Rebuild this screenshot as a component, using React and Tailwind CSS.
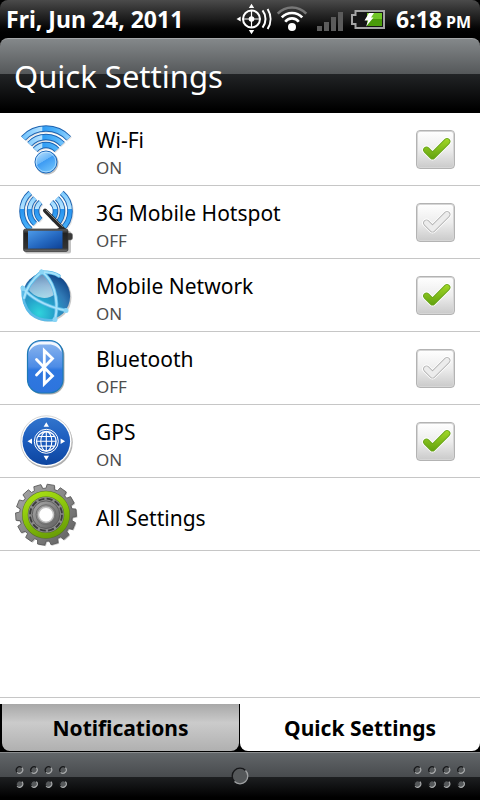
import { useState } from 'react';

const ROWS = [
  { id: 'wifi', label: 'Wi-Fi', icon: WifiIcon, on: true },
  { id: 'hotspot', label: '3G Mobile Hotspot', icon: HotspotIcon, on: false },
  { id: 'mobile', label: 'Mobile Network', icon: GlobeIcon, on: true },
  { id: 'bluetooth', label: 'Bluetooth', icon: BluetoothIcon, on: false },
  { id: 'gps', label: 'GPS', icon: GpsIcon, on: true },
];

const TABS = ['Notifications', 'Quick Settings'];

// arc centred on cx,cy going from angle a to angle b (degrees, clockwise)
function arc(cx, cy, r, a, b) {
  const p = (t) => {
    const rad = (t * Math.PI) / 180;
    return `${(cx + r * Math.cos(rad)).toFixed(2)} ${(cy + r * Math.sin(rad)).toFixed(2)}`;
  };
  return `M${p(a)}A${r} ${r} 0 0 1 ${p(b)}`;
}

function gearPath(cx, cy, outer, inner, teeth) {
  const step = (Math.PI * 2) / teeth;
  const pts = [];
  for (let i = 0; i < teeth; i++) {
    const a = i * step - Math.PI / 2 + 0.16;
    [[-0.36, inner], [-0.27, outer], [0.27, outer], [0.36, inner]].forEach(([k, r]) => {
      pts.push(`${(cx + r * Math.cos(a + k * step)).toFixed(2)} ${(cy + r * Math.sin(a + k * step)).toFixed(2)}`);
    });
  }
  return `M${pts.join('L')}Z`;
}

function RowSvg({ children }) {
  return (
    <svg viewBox="14 0 64 72" className="h-[72px] w-16 shrink-0" aria-hidden="true">
      {children}
    </svg>
  );
}

function Waves({ paths, fill, width }) {
  return (
    <g fill="none">
      {paths.map((d) => <path key={`s${d}`} d={d} stroke="#999" strokeOpacity="0.25" strokeWidth={width} transform="translate(1 1)" />)}
      {paths.map((d) => (
        <g key={d}>
          <path d={d} stroke="#1c62b0" strokeWidth={width} />
          <path d={d} stroke={fill} strokeWidth={width - 1.8} />
        </g>
      ))}
    </g>
  );
}

function WifiIcon() {
  return (
    <RowSvg>
      <defs>
        <linearGradient id="wf" gradientUnits="userSpaceOnUse" x1="22" y1="0" x2="70" y2="0">
          <stop offset="0" stopColor="#6fc2fd" />
          <stop offset="0.42" stopColor="#b5e2ff" />
          <stop offset="0.43" stopColor="#2f9cf4" />
          <stop offset="0.7" stopColor="#4fb2f9" />
          <stop offset="1" stopColor="#94d3ff" />
        </linearGradient>
        <linearGradient id="wd" x1="0" y1="0" x2="0.6" y2="1">
          <stop offset="0" stopColor="#c3e5fd" />
          <stop offset="0.5" stopColor="#6bb7f8" />
          <stop offset="0.52" stopColor="#3d9bf3" />
          <stop offset="1" stopColor="#6cc0fb" />
        </linearGradient>
      </defs>
      <Waves width={6.4} paths={[arc(46, 46.5, 31, 223, 317), arc(46, 46.5, 22.5, 223, 317), arc(46, 46.5, 14.5, 222, 318)]} fill="url(#wf)" />
      <circle cx="47" cy="50" r="11.500" fill="#999" fillOpacity="0.6" />
      <circle cx="46" cy="49" r="11" fill="url(#wd)" stroke="#1f69bb" strokeWidth="1" />
      <circle cx="46" cy="49" r="9.900" fill="none" stroke="#d9f0ff" strokeOpacity="0.7" strokeWidth="0.800" />
    </RowSvg>
  );
}

function HotspotIcon() {
  return (
    <RowSvg>
      <defs>
        <linearGradient id="hw" gradientUnits="userSpaceOnUse" x1="0" y1="6" x2="0" y2="44">
          <stop offset="0" stopColor="#7ccaff" />
          <stop offset="0.45" stopColor="#b8e5ff" />
          <stop offset="0.46" stopColor="#2794f0" />
          <stop offset="1" stopColor="#4db4fa" />
        </linearGradient>
        <linearGradient id="hs" x1="0" y1="0" x2="1" y2="1">
          <stop offset="0" stopColor="#4d9ae8" />
          <stop offset="0.55" stopColor="#2467bf" />
          <stop offset="1" stopColor="#0d4196" />
        </linearGradient>
        <linearGradient id="hb" x1="0" y1="0" x2="0" y2="1">
          <stop offset="0" stopColor="#666" />
          <stop offset="0.2" stopColor="#222" />
          <stop offset="0.85" stopColor="#333" />
          <stop offset="1" stopColor="#777" />
        </linearGradient>
      </defs>
      <Waves
        width={5.6}
        paths={[
          arc(46, 25, 24, 130, 229), arc(47, 25, 17.5, 133, 227), arc(48, 25, 11.5, 130, 230),
          arc(46, 25, 24, 311, 410), arc(45, 25, 17.5, 313, 407), arc(44, 25, 11.5, 310, 410),
        ]}
        fill="url(#hw)"
      />
      <rect x="25" y="45" width="46" height="22.500" rx="2" fill="#888" fillOpacity="0.5" />
      <path d="M45 24.500L65 45" stroke="#2a2a2a" strokeWidth="4" strokeLinecap="round" />
      <path d="M46 24L63 41" stroke="#888" strokeWidth="1" />
      <path d="M57 43L62 40.500L68 45V52H58Z" fill="#2a2a2a" />
      <rect x="66" y="47" width="6.500" height="7" rx="2" fill="#3a3a3a" stroke="#777" strokeWidth="0.600" />
      <rect x="23.500" y="43" width="44.500" height="22.500" rx="2" fill="url(#hb)" stroke="#333" strokeWidth="0.700" />
      <rect x="28" y="44.800" width="34.500" height="17.800" fill="url(#hs)" />
    </RowSvg>
  );
}

function GlobeIcon() {
  const lines = [
    'M22.500 28.500C29 37 43 47 66 51.500',
    'M41.500 12.500C52 20 60 38 55 61',
    'M24 39C26 30 33 20 41.500 13C48 13 55 14 59 17',
  ];
  const rim = 'M22.500 28.500C22 42 25 49 31 55C37 60 46 62 55 61';
  return (
    <RowSvg>
      <defs>
        <radialGradient id="gb" cx="0.35" cy="0.85" r="0.85">
          <stop offset="0" stopColor="#2fd3dc" />
          <stop offset="0.35" stopColor="#25a4cb" />
          <stop offset="0.7" stopColor="#3079b5" />
          <stop offset="1" stopColor="#14498a" />
        </radialGradient>
        <linearGradient id="gg" x1="0.1" y1="0" x2="0.5" y2="1">
          <stop offset="0" stopColor="#fff" stopOpacity="0.3" />
          <stop offset="1" stopColor="#fff" stopOpacity="0.6" />
        </linearGradient>
      </defs>
      <circle cx="47.500" cy="38.500" r="24" fill="#888" fillOpacity="0.45" />
      <circle cx="46.300" cy="37.300" r="23.800" fill="url(#gb)" />
      <path d="M29 31C31 23 36 17 42 15C49 20 53 27 55 35C47 42 35 39 29 31Z" fill="url(#gg)" />
      <path d={rim} fill="none" stroke="#5bbbe8" strokeWidth="2.600" strokeLinecap="round" />
      {lines.map((d) => <path key={d} d={d} fill="none" stroke="#5bbbe8" strokeWidth="3.600" strokeLinecap="round" />)}
      {lines.map((d) => <path key={`h${d}`} d={d} fill="none" stroke="#a6e2fa" strokeWidth="2" strokeLinecap="round" />)}
      {[[23, 29.5], [41.5, 13], [66, 51.5], [55, 60.5]].map(([x, y]) => (
        <circle key={x} cx={x} cy={y} r="2.500" fill="#8ad5f5" />
      ))}
    </RowSvg>
  );
}

function BluetoothIcon() {
  return (
    <RowSvg>
      <defs>
        <linearGradient id="bt" x1="0" y1="0" x2="0" y2="1">
          <stop offset="0" stopColor="#8fb8ef" />
          <stop offset="0.5" stopColor="#4d8ce6" />
          <stop offset="0.56" stopColor="#2f78e0" />
          <stop offset="1" stopColor="#2d74dd" />
        </linearGradient>
      </defs>
      <rect x="28.500" y="9.500" width="36" height="53" rx="14" fill="#777" fillOpacity="0.6" />
      <rect x="27.500" y="8.500" width="35.500" height="52.500" rx="13.500" fill="url(#bt)" stroke="#1d79b5" strokeWidth="1.200" />
      <path d="M29 20C29.500 13 35 9.700 41 9.700H50C56 9.700 61 13 61.500 20C58 14.500 54 12.500 49 12.500H41C36 12.500 32 14.500 29 20Z" fill="#fff" fillOpacity="0.9" />
      <path d="M36.500 27.500L52.500 44L44.300 52V18.500L52.500 26.500L36.500 43" fill="none" stroke="#fff" strokeWidth="2.800" strokeLinecap="round" strokeLinejoin="miter" />
    </RowSvg>
  );
}

function GpsIcon() {
  return (
    <RowSvg>
      <defs>
        <linearGradient id="gp" x1="0" y1="0" x2="0" y2="1">
          <stop offset="0" stopColor="#3275cd" />
          <stop offset="0.5" stopColor="#1c5cbd" />
          <stop offset="1" stopColor="#0d459f" />
        </linearGradient>
      </defs>
      <circle cx="47" cy="37.500" r="25.700" fill="#777" fillOpacity="0.6" />
      <circle cx="46.300" cy="36.300" r="25.500" fill="#fff" stroke="#bbb" strokeWidth="0.600" />
      <circle cx="46.300" cy="36.300" r="23.800" fill="url(#gp)" />
      <g fill="none" stroke="#fff" strokeWidth="1.100">
        <circle cx="46.300" cy="36.300" r="12" strokeWidth="1" />
        <circle cx="46.300" cy="36.300" r="9.800" strokeWidth="1.300" />
        <ellipse cx="46.300" cy="36.300" rx="5.500" ry="9.800" />
        <path d="M46.300 26.500V46.100M36.500 36.300H56.100M38 31.500H54.600M38 41.100H54.600" />
      </g>
      <path d="M46.300 17.300L49 21.800H43.600ZM46.300 55.300L49 50.800H43.600ZM27.500 36.300L32 33.600V39ZM65.100 36.300L60.600 33.600V39Z" fill="#fff" />
    </RowSvg>
  );
}

function GearIcon() {
  const gear = gearPath(46, 36.7, 30.5, 26.5, 14);
  return (
    <RowSvg>
      <defs>
        <linearGradient id="gr" x1="0" y1="0" x2="1" y2="1">
          <stop offset="0" stopColor="#aaa" />
          <stop offset="0.5" stopColor="#868686" />
          <stop offset="1" stopColor="#5c5c5c" />
        </linearGradient>
        <linearGradient id="gn" x1="0.3" y1="0" x2="0.7" y2="1">
          <stop offset="0" stopColor="#a4dc12" />
          <stop offset="0.5" stopColor="#86c00b" />
          <stop offset="1" stopColor="#6a9e06" />
        </linearGradient>
      </defs>
      <path d={gear} fill="#888" fillOpacity="0.5" transform="translate(1 1)" />
      <path d={gear} fill="url(#gr)" stroke="#5a5a5a" strokeWidth="0.900" strokeLinejoin="round" />
      <circle cx="46" cy="36.700" r="20.900" fill="#8a8a8a" stroke="#56702a" strokeWidth="6.200" />
      <circle cx="46" cy="36.700" r="20.900" fill="none" stroke="url(#gn)" strokeWidth="5.200" />
      <circle cx="46" cy="36.700" r="16" fill="none" stroke="#3c3c3c" strokeWidth="1.800" strokeDasharray="6 2.400" />
      <circle cx="46" cy="36.700" r="13.800" fill="url(#gr)" stroke="#585858" strokeWidth="0.900" />
      <circle cx="46" cy="36.700" r="10" fill="none" stroke="#6c6c6c" strokeWidth="0.900" />
      <circle cx="46" cy="36.700" r="7.500" fill="#fff" stroke="#c4c4c4" strokeWidth="1.400" />
    </RowSvg>
  );
}

function StatusIcons() {
  return (
    <>
      <svg viewBox="236 0 38 38" className="h-[38px] w-[38px]" aria-hidden="true">
        <g fill="none" stroke="#fff">
          <circle cx="251.500" cy="19" r="8.500" strokeWidth="2" />
          <path d="M251.500 10V28M242.500 19H260.500" strokeWidth="1.200" />
          <path d={arc(251.5, 19, 14, -38, 38)} strokeWidth="2" />
          <path d={arc(251.5, 19, 19, -32, 32)} strokeWidth="2" />
        </g>
        <circle cx="251.500" cy="19" r="2.800" fill="#fff" />
        <path d="M251.500 3.800L254.200 8H248.800ZM251.500 34.200L254.200 30H248.800ZM236.500 19L240.700 16.500V21.500Z" fill="#fff" />
      </svg>
      <svg viewBox="274 0 36 38" className="h-[38px] w-9" aria-hidden="true">
        <g fill="none" strokeWidth="2.600">
          <path d={arc(292, 27, 19.5, 223, 317)} stroke="#777" />
          <path d={arc(292, 27, 14, 223, 317)} stroke="#fff" />
          <path d={arc(292, 27, 8.6, 218, 322)} stroke="#fff" />
        </g>
        <circle cx="292" cy="27" r="4" fill="#fff" />
      </svg>
      <svg viewBox="310 0 37 38" className="h-[38px] w-[37px]" aria-hidden="true">
        <path d="M317 26h5v5h-5zM324 22h5v9h-5zM331 17h5v14h-5zM338 12h5v19h-5z" fill="#5b5b5b" />
      </svg>
      <svg viewBox="347 0 42 38" className="h-[38px] w-[42px]" aria-hidden="true">
        <defs>
          <linearGradient id="bg" x1="0" y1="0" x2="0" y2="1">
            <stop offset="0" stopColor="#72c72a" />
            <stop offset="0.45" stopColor="#6fc324" />
            <stop offset="0.5" stopColor="#49990a" />
            <stop offset="1" stopColor="#4b9c0a" />
          </linearGradient>
        </defs>
        <path d="M355.500 11H384V28H355.500V24H352V15H355.500Z" fill="#151515" stroke="#a4a4a4" strokeWidth="2" />
        <path d="M367 13H382V26H367Z" fill="url(#bg)" />
        <path d="M369 13H374L371 17.500H373.500L366 26.500L368.200 20.500H364.500Z" fill="#fff" />
      </svg>
    </>
  );
}

function CheckBox({ id, checked, onChange }) {
  const tick = 'M10.500 20L16.500 26L31 11.500';
  return (
    <span className="grid shrink-0 pt-px">
      <input
        id={id}
        type="checkbox"
        checked={checked}
        onChange={onChange}
        className="col-start-1 row-start-1 size-[39px] appearance-none rounded border border-[#b3b3b3] bg-linear-to-b from-white via-[#ededed] to-[#cacaca] shadow-[inset_0_0_0_1px_#d6d6d6]"
      />
      <svg viewBox="0 0 39 39" className="pointer-events-none col-start-1 row-start-1 size-[39px]" fill="none" strokeLinecap="round" strokeLinejoin="round" aria-hidden="true">
        <defs>
          <linearGradient id="ck" gradientUnits="userSpaceOnUse" x1="0" y1="8" x2="0" y2="30">
            <stop offset="0" stopColor="#a3d928" />
            <stop offset="1" stopColor="#5f9f0d" />
          </linearGradient>
        </defs>
        <path d={tick} stroke="#fff" strokeWidth="8.800" />
        <path d={tick} stroke={checked ? '#69a51a' : '#b4b4b4'} strokeWidth="6.800" />
        <path d={tick} stroke={checked ? 'url(#ck)' : '#ececec'} strokeWidth="5.200" />
      </svg>
    </span>
  );
}

function Dots() {
  return (
    <svg viewBox="0 0 54 24" className="h-6 w-[54px]" aria-hidden="true">
      {[5.5, 20, 34.5, 49].map((x) => [6, 20].map((y) => (
        <g key={`${x}-${y}`} fill="none">
          <circle cx={x} cy={y} r="3.500" fill="#55585a" />
          <path d={arc(x, y, 3.4, 135, 315)} stroke="#17181a" strokeWidth="1.100" />
          <path d={arc(x, y, 3.4, -45, 135)} stroke="#a9abac" strokeWidth="1.100" />
        </g>
      )))}
    </svg>
  );
}

export default function App() {
  const [state, setState] = useState(() => Object.fromEntries(ROWS.map((r) => [r.id, r.on])));
  const [tab, setTab] = useState('Quick Settings');

  const toggle = (id) => setState((prev) => ({ ...prev, [id]: !prev[id] }));

  return (
    <div className="flex min-h-screen flex-col bg-black font-['Noto_Sans','Open_Sans',sans-serif]">
      <div className="flex h-[38px] items-center justify-between rounded-t-lg bg-linear-to-b from-[#4b4b4b] via-[#1c1c1c] to-black pr-[9px] pl-[6px] text-white">
        <span className="text-[23px] font-bold whitespace-nowrap">Fri, Jun 24, 2011</span>
        <div className="flex items-center">
          <StatusIcons />
          <span className="ml-[7px] flex items-baseline gap-1 font-bold whitespace-nowrap">
            <span className="text-[23px]">6:18</span>
            <span className="text-base">PM</span>
          </span>
        </div>
      </div>

      <header className="flex h-[75px] items-center rounded-t-lg border-t border-[#a5a7a8] bg-[linear-gradient(#84888a_0%,#55585a_47%,#222426_47%,#000_95%)] px-[14px]">
        <h1 className="text-[31px] leading-10 text-white">Quick Settings</h1>
      </header>

      <main className="flex grow flex-col bg-white">
        <ul>
          {ROWS.map(({ id, label, icon: Icon }) => (
            <li key={id} className="border-b border-[#c6c6c6]">
              <label htmlFor={id} className="flex h-[72px] items-center pr-[25px] pl-[14px]">
                <Icon />
                <span className="ml-[18px] flex grow flex-col gap-0.5 pt-2">
                  <span className="text-[21px] leading-7 text-black">{label}</span>
                  <span className="text-[17px] leading-6 text-[#4d4d4d]">{state[id] ? 'ON' : 'OFF'}</span>
                </span>
                <CheckBox id={id} checked={state[id]} onChange={() => toggle(id)} />
              </label>
            </li>
          ))}
          <li className="border-b border-[#c6c6c6]">
            <button type="button" className="flex h-[72px] w-full items-center pr-[25px] pl-[14px] text-left">
              <GearIcon />
              <span className="ml-[18px] pt-2 text-[21px] leading-7 text-black">All Settings</span>
            </button>
          </li>
        </ul>
      </main>

      <nav className="border-t border-[#c6c6c6] bg-white pt-[6px]">
        <div className="grid h-12 grid-cols-2 bg-black pb-px">
          {TABS.map((name) => (
            <button
              key={name}
              type="button"
              onClick={() => setTab(name)}
              className={
                tab === name
                  ? 'rounded-b-lg bg-white pt-0.5 text-[21px] font-bold text-black'
                  : 'mr-px ml-0.5 rounded-b-lg bg-linear-to-b from-[#a8a8a8] via-[#cbcbcb] via-40% to-[#b0b0b0] pt-0.5 text-[21px] font-bold text-black'
              }
            >
              {name}
            </button>
          ))}
        </div>
      </nav>

      <footer className="flex h-12 items-center justify-between border-t border-[#8b8d8f] bg-[linear-gradient(#626669_0%,#484b4e_50%,#1e2022_50%,#000_95%)] px-[14px] pb-0.5">
        <Dots />
        <svg viewBox="0 0 20 20" className="size-5" fill="none" aria-hidden="true">
          <circle cx="10" cy="10" r="7.500" fill="#55585a" />
          <path d={arc(10, 10, 7.8, 135, 315)} stroke="#17181a" strokeWidth="1.300" />
          <path d={arc(10, 10, 7.8, -45, 135)} stroke="#a0a2a4" strokeWidth="1.300" />
        </svg>
        <Dots />
      </footer>
    </div>
  );
}
